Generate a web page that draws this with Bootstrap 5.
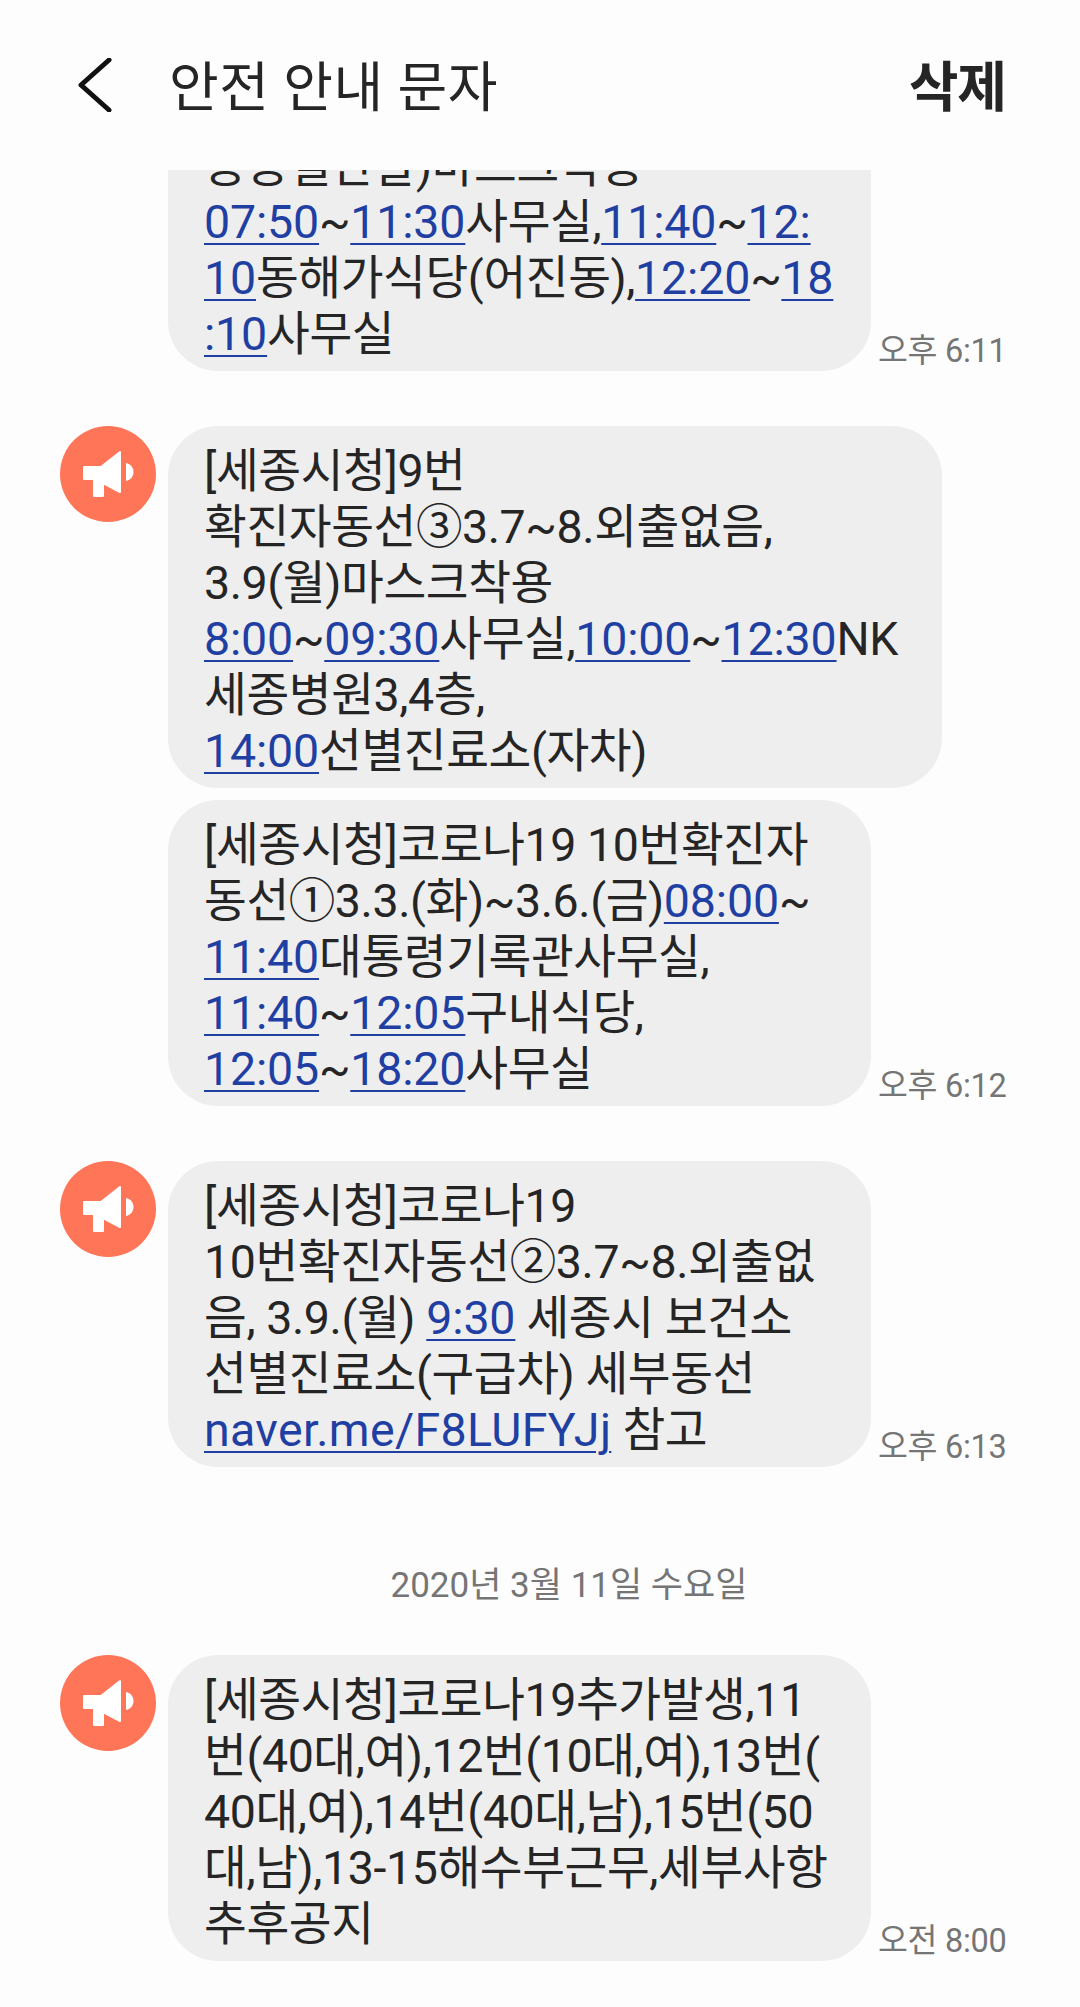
<!DOCTYPE html>
<html lang="ko">
<head>
  <meta charset="UTF-8" />
  <meta name="viewport" content="width=device-width, initial-scale=1.0"/>
  <title>안전 안내 문자</title>
  <link rel="stylesheet" href="https://cdn.jsdelivr.net/npm/bootstrap@5.3.2/dist/css/bootstrap.min.css"/>
  <style>
    body {
      font-family: Roboto, "Noto Sans CJK KR", "Noto Sans", sans-serif;
      background-color: #fdfdfd;
      color: #252525;
    }
    .app-screen {
      width: 1080px;
      height: 2007px;
      overflow: hidden;
    }
    .top-bar {
      height: 170px;
      padding: 0 74px 0 78px;
    }
    .back-icon {
      width: 34px;
      height: 54px;
      margin-right: 57px;
    }
    .top-title {
      font-size: 54px;
      line-height: 1;
      letter-spacing: .5px;
      padding-top: 7px;
    }
    .top-action {
      font-size: 54px;
      line-height: 1;
      font-weight: 700;
      letter-spacing: -1px;
      padding-top: 7px;
    }
    .msg-list {
      height: 1837px;
      overflow: hidden;
    }
    .msg-row {
      padding-left: 60px;
    }
    .msg-row + .msg-row {
      margin-top: 12px;
    }
    .msg-row.new-group {
      margin-top: 55px;
    }
    .sender-slot {
      width: 108px;
      flex-shrink: 0;
    }
    .sender-icon {
      width: 96px;
      height: 96px;
      display: block;
    }
    .bubble {
      width: 703px;
      padding: 17px 0 9px 36px;
      background-color: #eeeeee;
      border-radius: 50px;
      font-size: 46.500px;
      line-height: 56px;
      letter-spacing: -.4px;
      white-space: nowrap;
      flex-shrink: 0;
    }
    .bubble.wide {
      width: 774px;
    }
    .bubble.clipped {
      margin-top: -172px;
      height: 373px;
      padding-top: 0;
      display: flex;
      flex-direction: column;
      justify-content: flex-end;
    }
    .bubble a {
      color: #1f3fa3;
      letter-spacing: -.15px;
      text-decoration-thickness: 2px;
      text-underline-offset: 5px;
    }
    .bubble a.url-link {
      letter-spacing: .35px;
    }
    .msg-time {
      font-size: 32.500px;
      line-height: 1;
      color: #757575;
      margin-left: 7px;
      margin-bottom: 4px;
      white-space: nowrap;
      letter-spacing: -.3px;
    }
    .date-line {
      font-size: 35px;
      line-height: 1;
      color: #757575;
      margin: 101px 0 55px;
      padding-left: 58px;
      height: 32px;
    }
  </style>
</head>
<body>
  <div class="app-screen">
    <!-- Header -->
    <div class="top-bar d-flex align-items-center">
      <svg class="back-icon" viewBox="0 0 34 54" fill="none" stroke="#111" stroke-width="5" stroke-linecap="round" stroke-linejoin="round"><path d="M31 2 3 27l28 25"/></svg>
      <span class="top-title">안전 안내 문자</span>
      <span class="top-action ms-auto">삭제</span>
    </div>

    <div class="msg-list">
      <div class="msg-row d-flex align-items-end">
        <div class="sender-slot"></div>
        <div class="bubble clipped">
          <div>동동일간날)마스크착용<br>
          <a href="#">07:50</a>~<a href="#">11:30</a>사무실,<a href="#">11:40</a>~<a href="#">12:</a><br>
          <a href="#">10</a>동해가식당(어진동),<a href="#">12:20</a>~<a href="#">18</a><br>
          <a href="#">:10</a>사무실</div>
        </div>
        <div class="msg-time">오후 6:11</div>
      </div>

      <div class="msg-row new-group d-flex align-items-end">
        <div class="sender-slot align-self-start">
          <svg class="sender-icon" viewBox="0 0 96 96"><circle cx="48" cy="48" r="48" fill="#ff7557"/><path fill="#fff" stroke="#fff" stroke-width="2" stroke-linejoin="round" d="M24 41H41L60 26V66L43 57V70H34V53H24Z"/><path fill="#fff" d="M66 37c5 1 7.500 5 7.500 9s-2.500 8-7.500 9Z"/></svg>
        </div>
        <div class="bubble wide">
          [세종시청]9번<br>
          확진자동선③3.7~8.외출없음,<br>
          3.9(월)마스크착용<br>
          <a href="#">8:00</a>~<a href="#">09:30</a>사무실,<a href="#">10:00</a>~<a href="#">12:30</a>NK<br>
          세종병원3,4층,<br>
          <a href="#">14:00</a>선별진료소(자차)
        </div>
      </div>

      <div class="msg-row d-flex align-items-end">
        <div class="sender-slot"></div>
        <div class="bubble">
          [세종시청]코로나19 10번확진자<br>
          동선①3.3.(화)~3.6.(금)<a href="#">08:00</a>~<br>
          <a href="#">11:40</a>대통령기록관사무실,<br>
          <a href="#">11:40</a>~<a href="#">12:05</a>구내식당,<br>
          <a href="#">12:05</a>~<a href="#">18:20</a>사무실
        </div>
        <div class="msg-time">오후 6:12</div>
      </div>

      <div class="msg-row new-group d-flex align-items-end">
        <div class="sender-slot align-self-start">
          <svg class="sender-icon" viewBox="0 0 96 96"><circle cx="48" cy="48" r="48" fill="#ff7557"/><path fill="#fff" stroke="#fff" stroke-width="2" stroke-linejoin="round" d="M24 41H41L60 26V66L43 57V70H34V53H24Z"/><path fill="#fff" d="M66 37c5 1 7.500 5 7.500 9s-2.500 8-7.500 9Z"/></svg>
        </div>
        <div class="bubble">
          [세종시청]코로나19<br>
          10번확진자동선②3.7~8.외출없<br>
          음, 3.9.(월) <a href="#">9:30</a> 세종시 보건소<br>
          선별진료소(구급차) 세부동선<br>
          <a class="url-link" href="#">naver.me/F8LUFYJj</a> 참고
        </div>
        <div class="msg-time">오후 6:13</div>
      </div>

      <div class="date-line text-center">2020년 3월 11일 수요일</div>

      <div class="msg-row d-flex align-items-end">
        <div class="sender-slot align-self-start">
          <svg class="sender-icon" viewBox="0 0 96 96"><circle cx="48" cy="48" r="48" fill="#ff7557"/><path fill="#fff" stroke="#fff" stroke-width="2" stroke-linejoin="round" d="M24 41H41L60 26V66L43 57V70H34V53H24Z"/><path fill="#fff" d="M66 37c5 1 7.500 5 7.500 9s-2.500 8-7.500 9Z"/></svg>
        </div>
        <div class="bubble">
          [세종시청]코로나19추가발생,11<br>
          번(40대,여),12번(10대,여),13번(<br>
          40대,여),14번(40대,남),15번(50<br>
          대,남),13-15해수부근무,세부사항<br>
          추후공지
        </div>
        <div class="msg-time">오전 8:00</div>
      </div>
    </div>
  </div>
  <script src="https://cdn.jsdelivr.net/npm/bootstrap@5.3.2/dist/js/bootstrap.bundle.min.js"></script>
</body>
</html>
